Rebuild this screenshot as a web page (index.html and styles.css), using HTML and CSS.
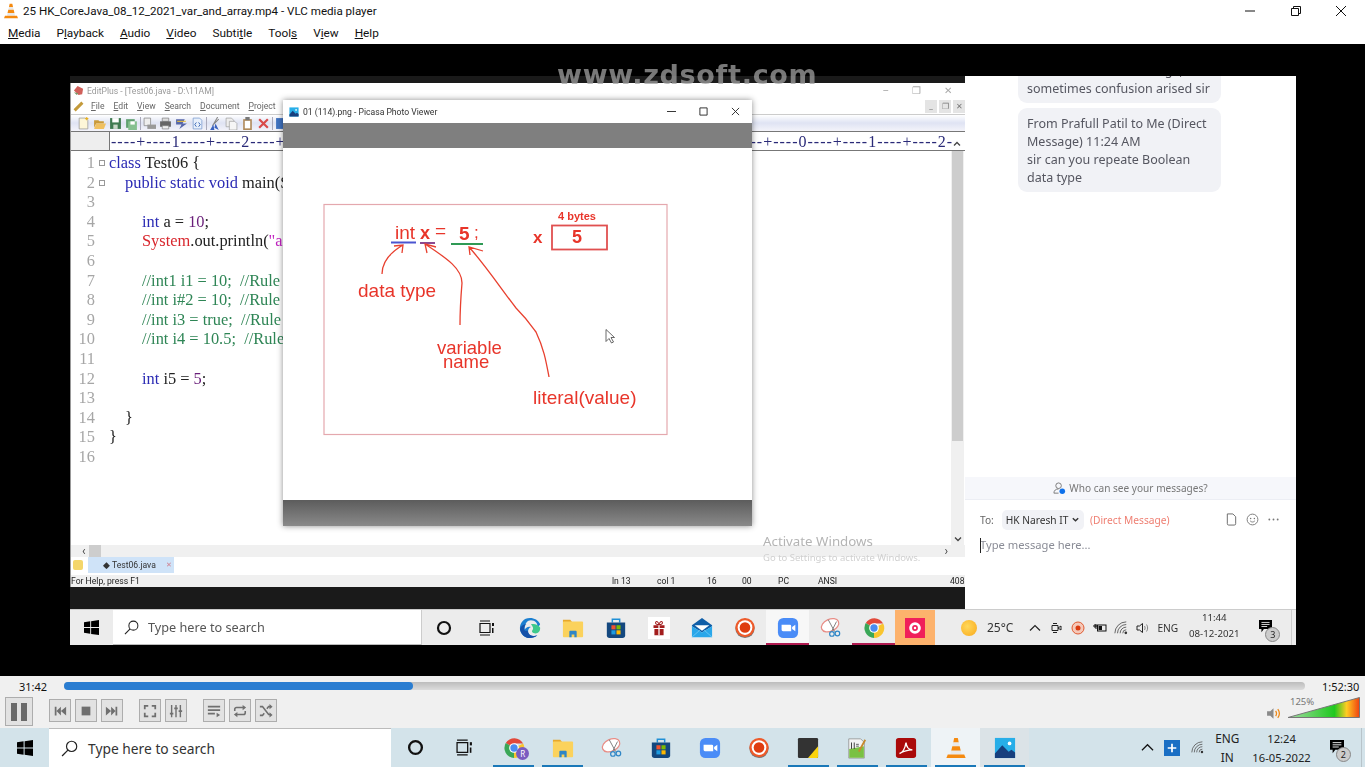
FILE: index.html
```html
<!DOCTYPE html>
<html lang="en">
<head>
    <meta charset="UTF-8">
    <title>25 HK_CoreJava_08_12_2021_var_and_array.mp4 - VLC media player</title>
    <link rel="stylesheet" href="styles.css">
</head>
<body>
    <!-- shared icons -->
    <svg class="sprite" xmlns="http://www.w3.org/2000/svg">
        <symbol id="i-win" viewBox="0 0 16 16"><path d="M0 2.300 6.600 1.300V7.500H0zM7.600 1.200 16 0V7.500H7.600zM0 8.500H6.600V14.700L0 13.700zM7.600 8.500H16V16L7.600 14.800z"/></symbol>
        <symbol id="i-search" viewBox="0 0 16 16"><circle cx="10" cy="6" r="4.800" fill="none" stroke="#222" stroke-width="1.100"/><path d="M6.500 9.500 1 15" stroke="#222" stroke-width="1.200"/></symbol>
        <symbol id="i-cortana" viewBox="0 0 16 16"><circle cx="8" cy="8" r="6" fill="none" stroke="#111" stroke-width="2.200"/></symbol>
        <symbol id="i-taskview" viewBox="0 0 16 16"><path d="M1 1h10M1 15h10M1 3.500h10v9H1z" fill="none" stroke="#111" stroke-width="1.200"/><rect x="13" y="3" width="2" height="3" fill="#111"/><rect x="13" y="8" width="1.500" height="5" fill="#111"/></symbol>
        <symbol id="i-edge" viewBox="0 0 24 24"><path d="M12 1C5 1 1 6.500 1 12c0 6.500 5 11 11 11 3.500 0 6-1 8-3-4 1.500-9 .5-10-3.500-.5-2.500 1-4.500 3-5.500-3-1-6 1-7 3C6.500 6.500 9 3.500 13 3.500c5 0 7.500 3.500 7 7 2-.5 3-2 3-3C21 3.500 17 1 12 1z" fill="#1b7fd0"/><path d="M13 8c4-1 8 .5 10 3.500 .5 4-2 6.500-5 6.500-3 0-5-2-3-4 1-1.500 0-4-2-6z" fill="#3ec98c"/><path d="M9.500 15c.5 5 6 7 10.500 5-2.500 2-5 3-8 3-6 0-10-4.500-11-10 1-3 4-5 7-5-2 1-3 4-1.500 7z" fill="#1450a8"/></symbol>
        <symbol id="i-folder" viewBox="0 0 24 24"><path d="M1 3h8l2 2.500H1z" fill="#e8a92c"/><rect x="1" y="5" width="22" height="17" rx="1" fill="#fbd25c"/><path d="M8 22v-6a1 1 0 0 1 1-1h6a1 1 0 0 1 1 1v6h-2.500v-3h-3v3z" fill="#2f86c6"/></symbol>
        <symbol id="i-store" viewBox="0 0 24 24"><path d="M8 6V2.500h8V6" fill="none" stroke="#1f8fd6" stroke-width="1.600"/><path d="M2 6h20v14a3 3 0 0 1-3 3H5a3 3 0 0 1-3-3z" fill="#14487f"/><rect x="7" y="9" width="4.500" height="4.500" fill="#f2522e"/><rect x="12.500" y="9" width="4.500" height="4.500" fill="#7fba00"/><rect x="7" y="14.500" width="4.500" height="4.500" fill="#1d9be0"/><rect x="12.500" y="14.500" width="4.500" height="4.500" fill="#ffb900"/></symbol>
        <symbol id="i-gift" viewBox="0 0 24 24"><rect width="24" height="24" fill="#fff"/><path d="M6 9h12v3H6zM7 13h10v7H7z" fill="#a31d1d"/><path d="M11.300 8h1.400v12h-1.400z" fill="#fff"/><path d="M12 8.500C9 8.500 7.500 7 8.500 5.500S12 6 12 8.500c0-2.500 2.500-4.500 3.500-3s-.5 3-3.500 3z" fill="none" stroke="#a31d1d" stroke-width="1.100"/></symbol>
        <symbol id="i-mail" viewBox="0 0 24 24"><path d="M1 9 12 1l11 8v1L12 17 1 10z" fill="#0f5ea8"/><path d="M1 10v12h22V10L12 17z" fill="#29a7ea"/><path d="M4 9h16l-8 6z" fill="#fff"/><path d="M1 22 10 14M23 22 14 14" stroke="#7ccdf5" stroke-width=".8"/></symbol>
        <symbol id="i-rec" viewBox="0 0 24 24"><circle cx="12" cy="12.500" r="10.500" fill="#777"/><circle cx="12" cy="11.500" r="10.500" fill="#ee5a2a"/><circle cx="12" cy="11.500" r="8" fill="#fff"/><circle cx="12" cy="11.500" r="5.800" fill="#df3d10"/></symbol>
        <symbol id="i-zoom" viewBox="0 0 24 24"><rect x="1" y="1" width="22" height="22" rx="6" fill="#4a8cf7"/><path d="M5 8.500h9a1.500 1.500 0 0 1 1.500 1.500v5.500h-9A1.500 1.500 0 0 1 5 14zM16.500 11 20 8.500v7L16.500 13z" fill="#fff"/></symbol>
        <symbol id="i-snip" viewBox="0 0 24 24"><ellipse cx="11" cy="9" rx="10" ry="6.500" transform="rotate(-25 11 9)" fill="#fff" stroke="#e88d86" stroke-width="1.300"/><path d="M9 3 16 16M18 5 13 15" stroke="#777" stroke-width="1"/><circle cx="13" cy="18.500" r="2.500" fill="none" stroke="#2f86c6" stroke-width="1.300"/><circle cx="19" cy="18" r="2.500" fill="none" stroke="#2f86c6" stroke-width="1.300"/></symbol>
        <symbol id="i-chrome" viewBox="0 0 24 24"><path d="M12 12 3 6.500A11 11 0 0 1 22 7H12z" fill="#e2493a"/><path d="M12 12 22 7a11 11 0 0 1-10 16z" fill="#f9c52f"/><path d="M12 12v11A11 11 0 0 1 3 6.500z" fill="#3aa757"/><circle cx="12" cy="12" r="5.300" fill="#fff"/><circle cx="12" cy="12" r="4" fill="#4a8cf0"/></symbol>
        <symbol id="i-pink" viewBox="0 0 24 24"><rect width="24" height="24" fill="#f01f5a"/><circle cx="12" cy="12" r="7" fill="#fff"/><circle cx="12" cy="12" r="3.500" fill="#f01f5a"/><circle cx="12" cy="12" r="1.500" fill="#fff"/><path d="M15 3.500h4v4z" fill="#f01f5a"/></symbol>
        <symbol id="i-sticky" viewBox="0 0 24 24"><rect x="1" y="1" width="22" height="22" rx="1.500" fill="#333"/><path d="M23 10v11.500a1.500 1.500 0 0 1-1.500 1.500H12z" fill="#fbd40f"/></symbol>
        <symbol id="i-notepad" viewBox="0 0 24 24"><path d="M3 2h13l4 4v17H3z" fill="#f3f3f3" stroke="#888" stroke-width=".8"/><path d="M3.500 13 19.500 10v12.500h-16z" fill="#7ac143"/><path d="M6 6v7M9 6v7" stroke="#333" stroke-width="1"/><path d="M11 8h3M11 10h3" stroke="#555"/><path d="M14 16 21 3" stroke="#c68a2d" stroke-width="2"/></symbol>
        <symbol id="i-pdf" viewBox="0 0 24 24"><rect x="1" y="1" width="22" height="22" rx="3" fill="#aa0a0a"/><path d="M5 18c3-1 6-6 7-12 .5 5 3 8 7 8-5 0-9 1-14 4z" fill="none" stroke="#fff" stroke-width="1.500"/></symbol>
        <symbol id="i-vlc" viewBox="0 0 24 24"><path d="M10 1h4l1 5H9z" fill="#f58a10"/><path d="M9 6h6l1 4H8z" fill="#e9e9e9"/><path d="M8 10h8l1.200 5H6.800z" fill="#f58a10"/><path d="M6.800 15h10.400l1 4H5.800z" fill="#e9e9e9"/><path d="M3 19h18l1.500 4h-21z" fill="#f58a10"/></symbol>
        <symbol id="i-photos" viewBox="0 0 24 24"><rect x="1" y="1" width="22" height="22" fill="#27aee8"/><circle cx="17" cy="7" r="2" fill="#fff"/><path d="M1 18 9 9l7 7 3-2 4 3v6H1z" fill="#173f7d"/></symbol>
        <symbol id="i-notif" viewBox="0 0 16 16"><path d="M0 0h16v11H6l-3 4v-4H0z"/><path d="M3 3h10M3 5.500h10M3 8h7" stroke="#fff" stroke-width="1"/></symbol>
        <symbol id="i-wifi" viewBox="0 0 16 16"><path d="M1 14a13 13 0 0 1 13-13M4 14A10 10 0 0 1 14 4M7 14a7 7 0 0 1 7-7M10 14a4 4 0 0 1 4-4" fill="none" stroke="#555" stroke-width="1"/><circle cx="13.500" cy="13.500" r="1.500" fill="#333"/></symbol>
    </svg>

    <div class="vlc">
        <header class="titlebar">
            <svg class="titlebar-logo"><use href="#i-vlc"/></svg>
            <span class="titlebar-text">25 HK_CoreJava_08_12_2021_var_and_array.mp4 - VLC media player</span>
            <div class="winbtns">
                <svg viewBox="0 0 10 10"><path d="M0 5h10" stroke="#111"/></svg>
                <svg viewBox="0 0 10 10"><path d="M.5 2.500h7v7h-7zM2.500 2.500v-2h7v7h-2" fill="none" stroke="#111"/></svg>
                <svg viewBox="0 0 10 10"><path d="M0 0l10 10M10 0 0 10" stroke="#111"/></svg>
            </div>
        </header>
        <nav class="menubar">
            <span><u>M</u>edia</span>
            <span>P<u>l</u>ayback</span>
            <span><u>A</u>udio</span>
            <span><u>V</u>ideo</span>
            <span>Subti<u>t</u>le</span>
            <span>Tool<u>s</u></span>
            <span>V<u>i</u>ew</span>
            <span><u>H</u>elp</span>
        </nav>

        <main class="video">
            <div class="watermark">www.zdsoft.com</div>
            <div class="rec">
                <section class="desk">
                    <div class="editplus">
                        <div class="ep-title">
                            <svg class="ep-logo" viewBox="0 0 12 12"><path d="M1 6 5 1l6 3-1 6-4 1z" fill="#d0605a"/><path d="M1 8l3 3 2-2z" fill="#7a9a6a"/></svg>
                            <span>EditPlus - [Test06.java - D:\11AM]</span>
                            <div class="ep-winbtns"><i>&#8211;</i><i>&#10064;</i><i>&#10005;</i></div>
                        </div>
                        <div class="ep-menu">
                            <span class="ep-pen"></span>
                            <span><u>F</u>ile</span><span><u>E</u>dit</span><span><u>V</u>iew</span><span><u>S</u>earch</span><span><u>D</u>ocument</span><span><u>P</u>roject</span>
                            <div class="ep-subbtns"><i>_</i><i>&#10064;</i><i>&#10005;</i></div>
                        </div>
                        <div class="ep-tools">
                            <svg viewBox="0 0 12 12"><path d="M2 1h6l2 2v8H2z" fill="#fdf6d8" stroke="#999" stroke-width=".7"/><path d="M9 0v3M7.500 1.500h3" stroke="#e8b020"/></svg>
                            <svg viewBox="0 0 12 12"><path d="M1 3h4l1 1h4v2H3L1 10z" fill="#c99a3a"/><path d="M3 6h9l-2 5H1z" fill="#f0c060"/></svg>
                            <svg viewBox="0 0 12 12"><path d="M1 1h10v10H1z" fill="#3f7a50"/><path d="M3 1h6v4H3z" fill="#fff"/><path d="M4 7h4v4H4z" fill="#c8d8c8"/></svg>
                            <svg viewBox="0 0 12 12"><path d="M1 2h8v8H1z" fill="#5fa070"/><path d="M3 4h8v8H3z" fill="#86c090"/><path d="M5 4h4v3H5z" fill="#fff"/></svg>
                            <b></b>
                            <svg viewBox="0 0 12 12"><path d="M1 1h6v7H1z" fill="#eee" stroke="#888" stroke-width=".7"/><path d="M4 7h8v4H4z" fill="#999"/></svg>
                            <svg viewBox="0 0 12 12"><path d="M3 1h6v3H3z" fill="#ddd" stroke="#777" stroke-width=".6"/><path d="M1 4h10v5H1z" fill="#666"/><path d="M3 8h6v3H3z" fill="#eee" stroke="#777" stroke-width=".6"/></svg>
                            <svg viewBox="0 0 12 12"><path d="M1 2h8l-2 4h4L4 11l2-4H1z" fill="#5566aa"/><path d="M2 4h8" stroke="#e8c040"/></svg>
                            <svg viewBox="0 0 12 12"><path d="M2 1h6l2 2v8H2z" fill="#e8f0fb" stroke="#7a9ad0" stroke-width=".7"/><path d="M5 5 3.500 7 5 9M7 5l1.500 2L7 9" fill="none" stroke="#2a5ab0" stroke-width=".8"/></svg>
                            <b></b>
                            <svg viewBox="0 0 12 12"><path d="M8 0 4 7M9 2 3 8" stroke="#888"/><path d="M4 7 1 12h4zM6 6l3 6-4-2z" fill="#3a62c0"/></svg>
                            <svg viewBox="0 0 12 12"><path d="M1 1h5l2 2v6H1z" fill="#eee" stroke="#999" stroke-width=".6"/><path d="M4 4h5l2 2v6H4z" fill="#f6f6f6" stroke="#999" stroke-width=".6"/></svg>
                            <svg viewBox="0 0 12 12"><path d="M2 2h8v10H2z" fill="#b08a5a"/><path d="M3.500 3.500h5v7h-5z" fill="#fff"/><path d="M4 0h4v3H4z" fill="#777"/></svg>
                            <svg viewBox="0 0 12 12"><path d="M2 2l8 8M10 2l-8 8" stroke="#d94a4a" stroke-width="2"/></svg>
                            <b></b>
                            <svg viewBox="0 0 12 12"><path d="M1 1h10v10H1z" fill="#3f72c0"/></svg>
                        </div>
                        <div class="ep-ruler">
                            <div class="ruler-text">----+----1----+----2----+----3----+----4----+----5----+----6----+----7----+----8----+----9----+----0----+----1----+----2-</div>
                        </div>
                        <div class="ep-body">
                            <div class="code">
                                <div class="ln"><em>1</em><s class="fold"></s><span><b>class</b> Test06 {</span></div>
                                <div class="ln"><em>2</em><s class="fold"></s><span class="in1"><b>public static void</b> main(String[] args) {</span></div>
                                <div class="ln"><em>3</em><s></s><span></span></div>
                                <div class="ln"><em>4</em><s></s><span class="in2"><b>int</b> a = <q>10</q>;</span></div>
                                <div class="ln"><em>5</em><s></s><span class="in2"><mark>System</mark>.out.println(<q class="str">"a = "</q> + a);</span></div>
                                <div class="ln"><em>6</em><s></s><span></span></div>
                                <div class="ln"><em>7</em><s></s><span class="in2 cm">//int1 i1 = 10;&nbsp; //Rule 1</span></div>
                                <div class="ln"><em>8</em><s></s><span class="in2 cm">//int i#2 = 10;&nbsp; //Rule 2</span></div>
                                <div class="ln"><em>9</em><s></s><span class="in2 cm">//int i3 = true;&nbsp; //Rule 3</span></div>
                                <div class="ln"><em>10</em><s></s><span class="in2 cm">//int i4 = 10.5;&nbsp; //Rule 4</span></div>
                                <div class="ln"><em>11</em><s></s><span></span></div>
                                <div class="ln"><em>12</em><s></s><span class="in2"><b>int</b> i5 = <q>5</q>;</span></div>
                                <div class="ln"><em>13</em><s></s><span></span></div>
                                <div class="ln"><em>14</em><s></s><span class="in1">}</span></div>
                                <div class="ln"><em>15</em><s></s><span>}</span></div>
                                <div class="ln"><em>16</em><s></s><span></span></div>
                            </div>
                            <div class="ep-vscroll">
                                <svg class="vs-up" viewBox="0 0 10 10"><path d="M2 6.500 5 3.500l3 3" fill="none" stroke="#444" stroke-width="1.300"/></svg>
                                <div class="thumb"></div>
                                <svg class="vs-down" viewBox="0 0 10 10"><path d="M2 3.500 5 6.500l3-3" fill="none" stroke="#444" stroke-width="1.300"/></svg>
                            </div>
                        </div>
                        <div class="ep-hscroll"><span class="hs-left">&lsaquo;</span><span class="hs-thumb"></span><span class="hs-right">&rsaquo;</span></div>
                        <div class="ep-tabs">
                            <span class="tab-folder"></span>
                            <span class="tab"><span class="tab-name">&#9670; Test06.java</span><span class="tab-x">&#10005;</span></span>
                        </div>
                        <div class="ep-status">
                            <span class="st-help">For Help, press F1</span>
                            <span class="st-ln">ln 13</span>
                            <span class="st-col">col 1</span>
                            <span class="st-a">16</span>
                            <span class="st-b">00</span>
                            <span class="st-pc">PC</span>
                            <span class="st-ansi">ANSI</span>
                            <span class="st-size">408</span>
                        </div>
                        <div class="activate">
                            <div class="activate-a">Activate Windows</div>
                            <div class="activate-b">Go to Settings to activate Windows.</div>
                        </div>
                    </div>

                    <div class="picasa">
                        <div class="pc-title">
                            <svg class="pc-logo"><use href="#i-photos"/></svg>
                            <span>01 (114).png - Picasa Photo Viewer</span>
                            <div class="pc-btns">
                                <svg viewBox="0 0 10 10"><path d="M0 5h10" stroke="#222"/></svg>
                                <svg viewBox="0 0 10 10"><path d="M1 1h8v8H1z" fill="none" stroke="#222"/></svg>
                                <svg viewBox="0 0 10 10"><path d="M1 1l8 8M9 1 1 9" stroke="#222"/></svg>
                            </div>
                        </div>
                        <div class="pc-bar-top"></div>
                        <svg class="sketch" viewBox="283 148 469 352" xmlns="http://www.w3.org/2000/svg">
                            <rect x="324" y="204.500" width="343" height="230" fill="none" stroke="#e4a8ae" stroke-width="1.200"/>
                            <text x="395" y="239" class="ink f19">int</text>
                            <text x="420" y="239" class="ink f18 bold">x</text>
                            <text x="435" y="237" class="ink f19">=</text>
                            <text x="459" y="240" class="ink f19 bold">5</text>
                            <text x="474" y="238" class="ink f17">;</text>
                            <path d="M391 242.500h25" stroke="#4a55d0" stroke-width="2"/>
                            <path d="M420 243h15" stroke="#8a4a90" stroke-width="2"/>
                            <path d="M451 244h32" stroke="#2f9a55" stroke-width="2"/>
                            <text x="558" y="220" class="ink f11 bold">4 bytes</text>
                            <text x="533" y="243" class="ink f17 bold">x</text>
                            <rect x="552" y="225.500" width="55" height="24" fill="none" stroke="#e05050" stroke-width="1.800"/>
                            <text x="572" y="243" class="ink f18 bold">5</text>
                            <g fill="none" stroke="#e8402f" stroke-width="1.300">
                                <path d="M382 274c0-12 9-22 21-29M394 246l9-1-1 8"/>
                                <path d="M460 325c0-18 1-30 2-42 0-14-14-24-37-39M436 247l-11-3 2 9"/>
                                <path d="M549 377c-3-16-5-28-13-45-8-11-10-14-20-24-14-18-30-42-47-61M483 251l-14-4 1 8"/>
                            </g>
                            <text x="358" y="297" class="ink f19">data type</text>
                            <text x="437" y="354" class="ink f185">variable</text>
                            <text x="443" y="368" class="ink f185">name</text>
                            <text x="533" y="404" class="ink f19">literal(value)</text>
                            <path d="M606 329.500v12l3-3 2.500 4.500 2-1-2.500-4.500h3.500z" fill="#fff" stroke="#444" stroke-width=".8"/>
                        </svg>
                        <div class="pc-bar-bottom"></div>
                    </div>
                    <div class="desk-gap"></div>
                </section>

                <aside class="chat">
                    <div class="chat-list">
                        <div class="bubble">Shall we use this message,<br>sometimes confusion arised sir</div>
                        <div class="bubble">From Prafull Patil to Me (Direct Message) 11:24 AM<br>sir can you repeate Boolean data type</div>
                    </div>
                    <div class="who">
                        <svg viewBox="0 0 14 14"><circle cx="6" cy="4" r="3" fill="none" stroke="#777"/><path d="M1 12c0-3 2-4.500 5-4.500" fill="none" stroke="#777"/><path d="M1 12h5" stroke="#777"/><circle cx="10" cy="10" r="3" fill="#0e71eb"/></svg>
                        <span>Who can see your messages?</span>
                    </div>
                    <div class="compose-head">
                        <span class="to">To:</span>
                        <span class="chip">HK Naresh IT <svg viewBox="0 0 10 10"><path d="M2 3.500 5 6.500 8 3.500" fill="none" stroke="#333" stroke-width="1.500"/></svg></span>
                        <span class="direct">(Direct Message)</span>
                        <div class="compose-icons">
                            <svg viewBox="0 0 12 14"><path d="M1.500 1h6l3 3v7.500a1.500 1.500 0 0 1-1.500 1.500H3a1.500 1.500 0 0 1-1.500-1.500z" fill="none" stroke="#666"/></svg>
                            <svg viewBox="0 0 14 14"><circle cx="7" cy="7" r="5.800" fill="none" stroke="#777"/><circle cx="5" cy="5.800" r=".8" fill="#777"/><circle cx="9" cy="5.800" r=".8" fill="#777"/><path d="M4.500 8.500c1.500 1.600 3.500 1.600 5 0" fill="none" stroke="#777"/></svg>
                            <svg viewBox="0 0 14 14"><circle cx="2.500" cy="7" r="1" fill="#777"/><circle cx="7" cy="7" r="1" fill="#777"/><circle cx="11.500" cy="7" r="1" fill="#777"/></svg>
                        </div>
                    </div>
                    <div class="compose-input"><span class="caret"></span>Type message here...</div>
                </aside>

                <footer class="inner-bar">
                    <span class="ib-start"><svg><use href="#i-win"/></svg></span>
                    <span class="ib-search"><svg><use href="#i-search"/></svg>Type here to search</span>
                    <span class="ib-cell"><svg class="small"><use href="#i-cortana"/></svg></span>
                    <span class="ib-cell"><svg class="small"><use href="#i-taskview"/></svg></span>
                    <span class="ib-cell"><svg><use href="#i-edge"/></svg></span>
                    <span class="ib-cell"><svg><use href="#i-folder"/></svg></span>
                    <span class="ib-cell"><svg><use href="#i-store"/></svg></span>
                    <span class="ib-cell"><svg><use href="#i-gift"/></svg></span>
                    <span class="ib-cell"><svg><use href="#i-mail"/></svg></span>
                    <span class="ib-cell"><svg><use href="#i-rec"/></svg></span>
                    <span class="ib-cell is-active"><svg><use href="#i-zoom"/></svg></span>
                    <span class="ib-cell"><svg><use href="#i-snip"/></svg></span>
                    <span class="ib-cell is-open"><svg><use href="#i-chrome"/></svg></span>
                    <span class="ib-cell is-flash"><svg><use href="#i-pink"/></svg></span>
                    <div class="ib-tray">
                        <span class="sun"></span>
                        <span class="temp">25°C</span>
                        <svg class="tray-i" viewBox="0 0 14 14"><path d="M2 9.500 7 4.500l5 5" fill="none" stroke="#222" stroke-width="1.200"/></svg>
                        <svg class="tray-i" viewBox="0 0 14 14"><path d="M2 4.500h6v5H2zM8 7l3-2v4zM3 2.500h4M3 11.500h4" fill="none" stroke="#222"/></svg>
                        <svg class="tray-i" viewBox="0 0 14 14"><circle cx="7" cy="7" r="6" fill="#f5c8b8" stroke="#e05a30"/><circle cx="7" cy="7" r="2.500" fill="#d93a10"/></svg>
                        <svg class="tray-i" viewBox="0 0 14 14"><path d="M1 4h2v2h-2zM3 3v5" stroke="#111" fill="none"/><rect x="4.500" y="4" width="8.500" height="6" fill="none" stroke="#111"/><rect x="5.500" y="5" width="3.500" height="4" fill="#111"/></svg>
                        <svg class="tray-i"><use href="#i-wifi"/></svg>
                        <svg class="tray-i" viewBox="0 0 14 14"><path d="M1 5h2.500L6.500 2.500v9L3.500 9H1z" fill="none" stroke="#222"/><path d="M8.500 5c.8 1.300.8 2.700 0 4M10.500 3.500c1.500 2 1.500 5 0 7" fill="none" stroke="#888"/></svg>
                        <span class="ib-eng">ENG</span>
                        <span class="ib-clock">11:44<br>08-12-2021</span>
                        <span class="notif"><svg><use href="#i-notif"/></svg><span class="notif-badge">3</span></span>
                    </div>
                </footer>
            </div>
        </main>

        <section class="controls">
            <div class="seek">
                <span class="seek-time">31:42</span>
                <div class="seek-track"><div class="seek-fill"></div></div>
                <span class="seek-time end">1:52:30</span>
            </div>
            <div class="btnrow">
                <button class="cbtn big"><svg viewBox="0 0 24 24"><path d="M4 3h6v18H4zM14 3h6v18h-6z" fill="#6a6a6a"/></svg></button>
                <div class="cgroup">
                    <button class="cbtn"><svg viewBox="0 0 16 16"><path d="M2 3h2v10H2zM9 3v10L4 8zM15 3v10L9 8z" fill="#6f6f6f"/></svg></button>
                    <button class="cbtn"><svg viewBox="0 0 16 16"><path d="M3 3h10v10H3z" fill="#6f6f6f"/></svg></button>
                    <button class="cbtn"><svg viewBox="0 0 16 16"><path d="M14 3h-2v10h2zM7 3v10l5-5zM1 3v10l6-5z" fill="#6f6f6f"/></svg></button>
                </div>
                <div class="cgroup">
                    <button class="cbtn"><svg viewBox="0 0 16 16"><path d="M2 6V2h4M10 2h4v4M14 10v4h-4M6 14H2v-4" fill="none" stroke="#6f6f6f" stroke-width="2"/></svg></button>
                    <button class="cbtn"><svg viewBox="0 0 16 16"><path d="M3 1v14M8 1v14M13 1v14" stroke="#6f6f6f" stroke-width="1.600"/><path d="M1 10h4v2H1zM6 4h4v2H6zM11 7h4v2h-4z" fill="#6f6f6f"/></svg></button>
                </div>
                <div class="cgroup">
                    <button class="cbtn"><svg viewBox="0 0 16 16"><path d="M1 3h14M1 7h14M1 11h8" stroke="#6f6f6f" stroke-width="1.800"/><path d="M11 10v5l4-2.500z" fill="#6f6f6f"/></svg></button>
                    <button class="cbtn"><svg viewBox="0 0 16 16"><path d="M2 8V6a2 2 0 0 1 2-2h9M14 8v2a2 2 0 0 1-2 2H3" fill="none" stroke="#6f6f6f" stroke-width="1.800"/><path d="M11 1l4 3-4 3zM5 9l-4 3 4 3z" fill="#6f6f6f"/></svg></button>
                    <button class="cbtn"><svg viewBox="0 0 16 16"><path d="M1 3h3l7 9h2M1 13h3l2-2.500M9 5.500 11 3h2" fill="none" stroke="#6f6f6f" stroke-width="1.800"/><path d="M12 0l3.500 3L12 6zM12 9.500l3.500 3L12 15.500z" fill="#6f6f6f"/></svg></button>
                </div>
                <div class="volume">
                    <svg class="vol-icon" viewBox="0 0 14 14"><path d="M1 5h3l3-3v10L4 9H1z" fill="#8a8a8a"/><path d="M9 4.500c1 1.500 1 3.500 0 5M11 3c1.800 2.400 1.800 5.600 0 8" fill="none" stroke="#ee8a1a" stroke-width="1.200"/></svg>
                    <div class="vol-wrap">
                        <svg class="vol-bar" viewBox="0 0 73 21" preserveAspectRatio="none">
                            <defs>
                                <linearGradient id="vol-grad">
                                    <stop offset="0" stop-color="#a4dca4"/>
                                    <stop offset=".65" stop-color="#1fc81f"/>
                                    <stop offset=".82" stop-color="#ffcc22"/>
                                    <stop offset="1" stop-color="#f04010"/>
                                </linearGradient>
                            </defs>
                            <path d="M1 20.500 72.500 .5v20z" fill="url(#vol-grad)" stroke="#777" stroke-width="1"/>
                        </svg>
                        <span class="vol-pct">125%</span>
                    </div>
                </div>
            </div>
        </section>

        <footer class="taskbar">
            <span class="tb-start"><svg><use href="#i-win"/></svg></span>
            <span class="tb-search"><svg><use href="#i-search"/></svg>Type here to search</span>
            <span class="tb-cell"><svg class="med"><use href="#i-cortana"/></svg></span>
            <span class="tb-cell"><svg class="med"><use href="#i-taskview"/></svg></span>
            <span class="tb-cell is-open"><svg><use href="#i-chrome"/></svg><span class="avatar">R</span></span>
            <span class="tb-cell is-open"><svg><use href="#i-folder"/></svg></span>
            <span class="tb-cell"><svg><use href="#i-snip"/></svg></span>
            <span class="tb-cell"><svg><use href="#i-store"/></svg></span>
            <span class="tb-cell"><svg><use href="#i-zoom"/></svg></span>
            <span class="tb-cell"><svg><use href="#i-rec"/></svg></span>
            <span class="tb-cell is-open"><svg><use href="#i-sticky"/></svg></span>
            <span class="tb-cell is-open"><svg><use href="#i-notepad"/></svg></span>
            <span class="tb-cell is-open"><svg><use href="#i-pdf"/></svg></span>
            <span class="tb-cell is-open is-active"><svg><use href="#i-vlc"/></svg></span>
            <span class="tb-cell is-open is-hover"><svg><use href="#i-photos"/></svg></span>
            <div class="tb-tray">
                <svg class="tb-caret" viewBox="0 0 14 14"><path d="M1 10 7 4l6 6" fill="none" stroke="#111" stroke-width="1.300"/></svg>
                <span class="tb-plus"><svg viewBox="0 0 14 14"><path d="M7 2v10M2 7h10" stroke="#fff" stroke-width="2"/></svg></span>
                <svg class="tb-wifi"><use href="#i-wifi"/></svg>
                <span class="tb-eng">ENG<br>IN</span>
                <span class="tb-clock">12:24<br>16-05-2022</span>
                <span class="notif big"><svg><use href="#i-notif"/></svg><span class="notif-badge">2</span></span>
            </div>
        </footer>
    </div>
</body>
</html>
```

FILE: styles.css
```css
html, body {
    margin: 0;
    padding: 0;
    width: 1365px;
    height: 767px;
    overflow: hidden;
    background: #000;
    font-family: "Noto Sans", "Open Sans", sans-serif;
}
.sprite {
    position: absolute;
    width: 0;
    height: 0;
}
.vlc {
    display: flex;
    flex-direction: column;
    height: 767px;
}

/* title + menu */
.titlebar {
    height: 22px;
    background: #fff;
    display: flex;
    align-items: center;
    padding-left: 3px;
    color: #111;
    font-family: Roboto, sans-serif;
    font-size: 11.600px;
}
.titlebar-logo {
    width: 16px;
    height: 16px;
    margin-right: 4px;
}
.winbtns {
    margin-left: auto;
    display: flex;
    gap: 35.500px;
    padding-right: 19px;
}
.winbtns svg {
    width: 10px;
    height: 10px;
}
.menubar {
    height: 22px;
    background: #fff;
    display: flex;
    align-items: center;
    gap: 16px;
    padding-left: 8px;
    font-family: Roboto, sans-serif;
    font-size: 11.800px;
    color: #111;
}

/* video area */
.video {
    flex: 1;
    position: relative;
    background: #000;
    padding: 32px 69px 31px 70px;
}
.watermark {
    position: absolute;
    left: 557px;
    top: 15px;
    z-index: 5;
    font-family: "DejaVu Sans", sans-serif;
    font-weight: bold;
    font-size: 27px;
    letter-spacing: .7px;
    color: rgba(160, 160, 160, 0.75);
    filter: blur(.5px);
}
.rec {
    position: relative;
    display: grid;
    grid-template-columns: 895px 331px;
    grid-template-rows: 533px 36px;
    height: 569px;
}
.desk {
    position: relative;
    background: #1a1a1a;
    padding-top: 7px;
    filter: blur(.35px);
}
.desk-gap {
    height: 22px;
}

/* EditPlus */
.editplus {
    position: relative;
    height: 504px;
    background: #fff;
    display: flex;
    flex-direction: column;
    color: #333;
    font-family: Roboto, sans-serif;
    font-size: 8.600px;
    box-sizing: border-box;
    border-left: 1px solid #999;
}
.ep-title {
    height: 15px;
    display: flex;
    align-items: center;
    color: #999;
    padding-left: 2px;
    gap: 3px;
}
.ep-logo {
    width: 11px;
    height: 11px;
}
.ep-winbtns {
    margin-left: auto;
    display: flex;
    gap: 23px;
    padding-right: 13px;
    font-size: 10px;
    color: #aaa;
}
.ep-winbtns i, .ep-subbtns i {
    font-style: normal;
}
.ep-menu {
    height: 16px;
    display: flex;
    align-items: center;
    gap: 9px;
    padding-left: 2px;
    color: #666;
}
.ep-pen {
    width: 11px;
    height: 3px;
    background: #c49a3a;
    transform: rotate(-45deg);
    margin-right: -2px;
}
.ep-subbtns {
    margin-left: auto;
    display: flex;
    gap: 2px;
    font-size: 8px;
}
.ep-subbtns i {
    width: 12px;
    height: 13px;
    line-height: 13px;
    text-align: center;
    background: #e4e4e4;
    color: #777;
}
.ep-tools {
    height: 17px;
    display: flex;
    align-items: center;
    gap: 3px;
    padding-left: 6px;
    background: linear-gradient(#fff, #dfe3f3 50%, #f4f4fa);
    border-top: 1px solid #ccc;
    box-sizing: border-box;
}
.ep-tools svg {
    width: 13px;
    height: 13px;
}
.ep-tools b {
    width: 1px;
    height: 13px;
    background: #aab;
    margin: 0 -1px;
}
.ep-ruler {
    height: 20px;
    padding-left: 40px;
    overflow: hidden;
    border-top: 1px solid #777;
    border-bottom: 1px solid #777;
    box-sizing: border-box;
    background-color: #fff;
    background-image: linear-gradient(#777, #777), linear-gradient(#eee, #eee);
    background-size: 1px 100%, 38px 100%;
    background-position: 38px 0, 0 0;
    background-repeat: no-repeat;
}
.ruler-text {
    font-family: "Liberation Serif", serif;
    font-size: 16px;
    line-height: 20px;
    letter-spacing: 1px;
    color: #2a2a78;
    white-space: nowrap;
}
.ep-body {
    flex: 1;
    display: flex;
    min-height: 0;
}
.code {
    flex: 1;
    padding-top: 2px;
    font-family: "Liberation Serif", serif;
    font-size: 16.400px;
    color: #222;
}
.ln {
    display: flex;
    height: 19.600px;
    line-height: 19.600px;
    white-space: nowrap;
}
.ln em {
    width: 24px;
    text-align: right;
    font-style: normal;
    color: #a6a6a6;
}
.ln s {
    width: 6px;
    height: 6px;
    margin: 7px 4px 0 4px;
}
.ln s.fold {
    box-sizing: border-box;
    border: 1px solid #999;
}
.ln b {
    font-weight: normal;
    color: #2a2ab4;
}
.ln q {
    quotes: none;
    color: #6a1f7a;
}
.ln q.str {
    color: #c020c0;
}
.ln mark {
    background: none;
    color: #d8262c;
}
.ln .in1 { padding-left: 16px; }
.ln .in2 { padding-left: 33px; }
.ln .cm { color: #2e8555; }
.ep-vscroll {
    position: relative;
    width: 13px;
    margin-right: 1px;
    background: #f0f0f0;
    display: flex;
    flex-direction: column;
    align-items: center;
}
.ep-vscroll .thumb {
    width: 11px;
    height: 290px;
    background: #cdcdcd;
}
.vs-up {
    position: absolute;
    top: -12px;
    left: 1px;
    width: 10px;
    height: 10px;
}
.vs-down {
    width: 10px;
    height: 10px;
    margin-top: auto;
    margin-bottom: 1px;
}
.ep-hscroll {
    height: 12px;
    background: #f0f0f0;
    display: flex;
    align-items: center;
    padding-left: 11px;
    font-size: 12px;
    color: #444;
}
.hs-thumb {
    width: 12px;
    height: 12px;
    background: #cdcdcd;
    margin-left: 3px;
}
.hs-right {
    margin-left: auto;
    padding-right: 17px;
}
.ep-tabs {
    height: 16px;
    display: flex;
    align-items: center;
    background: #fff;
    margin-bottom: 2px;
    gap: 5px;
}
.tab-folder {
    width: 10px;
    height: 10px;
    margin-left: 2px;
    background: #f4d66a;
    border-radius: 2px;
}
.tab {
    width: 86px;
    height: 16px;
    background: #cfe3f8;
    display: flex;
    align-items: center;
    justify-content: space-between;
    padding: 0 2px 0 15px;
    box-sizing: border-box;
}
.tab-x {
    color: #d08090;
    font-size: 7px;
}
.ep-status {
    height: 12px;
    background: #f0f0f0;
    display: grid;
    grid-template-columns: 541px 45px 50px 35px 36px 40px 1fr 15px;
    align-items: center;
    white-space: nowrap;
    color: #222;
}
.activate {
    position: absolute;
    left: 692px;
    top: 449px;
    color: #b4b4b4;
}
.activate-a {
    font-family: "Noto Sans", sans-serif;
    font-size: 13.300px;
}
.activate-b {
    font-family: "Noto Sans", sans-serif;
    font-size: 9.500px;
    color: #d0d0d0;
    margin-top: 1px;
}

/* Picasa window */
.picasa {
    position: absolute;
    left: 213px;
    top: 24px;
    width: 469px;
    height: 426px;
    background: #fff;
    box-shadow: 0 0 6px rgba(0, 0, 0, 0.45);
    display: flex;
    flex-direction: column;
}
.pc-title {
    height: 23px;
    display: flex;
    align-items: center;
    padding-left: 6px;
    gap: 4px;
    font-family: Roboto, sans-serif;
    font-size: 8.600px;
    color: #333;
}
.pc-logo {
    width: 10px;
    height: 10px;
}
.pc-btns {
    margin-left: auto;
    display: flex;
    gap: 23px;
    padding-right: 12px;
}
.pc-btns svg {
    width: 9px;
    height: 9px;
}
.pc-bar-top {
    height: 25px;
    background: #7f7f7f;
}
.sketch {
    width: 469px;
    height: 352px;
    display: block;
}
.pc-bar-bottom {
    height: 26px;
    background: linear-gradient(#5c5c5c, #8a8a8a);
}
.ink {
    font-family: "Liberation Sans", sans-serif;
    fill: #e8352a;
}
.f11 { font-size: 11px; }
.f17 { font-size: 17px; }
.f18 { font-size: 18px; }
.f185 { font-size: 18.500px; }
.f19 { font-size: 19px; }
.bold { font-weight: bold; }

/* Zoom chat */
.chat {
    background: #fff;
    display: flex;
    flex-direction: column;
    filter: blur(.2px);
    font-size: 12.500px;
    color: #555660;
}
.chat-list {
    height: 116px;
    overflow: hidden;
    display: flex;
    flex-direction: column;
    justify-content: flex-end;
    gap: 5px;
    padding-left: 53px;
}
.bubble {
    width: 203px;
    box-sizing: border-box;
    padding: 7px 9px 5px;
    line-height: 18px;
    background: #f1f2f6;
    border-radius: 9px;
}
.who {
    margin-top: auto;
    height: 22px;
    background: #f6f7fb;
    border-bottom: 1px solid #eceef4;
    display: flex;
    align-items: center;
    justify-content: center;
    gap: 3px;
    font-size: 10.100px;
    color: #777;
    margin-bottom: 9px;
}
.who svg {
    width: 13px;
    height: 13px;
}
.compose-head {
    display: flex;
    align-items: center;
    height: 21px;
    padding-left: 15px;
    font-size: 10.200px;
}
.to {
    width: 22px;
    color: #666;
}
.chip {
    width: 82px;
    height: 20px;
    box-sizing: border-box;
    background: #f1f2f6;
    border-radius: 5px;
    display: flex;
    align-items: center;
    justify-content: center;
    gap: 3px;
    color: #333;
}
.chip svg {
    width: 9px;
    height: 9px;
}
.direct {
    margin-left: 6px;
    color: #ef7f72;
}
.compose-icons {
    margin-left: auto;
    display: flex;
    gap: 8px;
    padding-right: 16px;
    align-items: center;
}
.compose-icons svg {
    width: 13px;
    height: 13px;
}
.compose-input {
    position: relative;
    padding: 7px 0 0 15px;
    margin-bottom: 57px;
    font-size: 11.200px;
    color: #8a8c96;
}
.caret {
    position: absolute;
    left: 15px;
    top: 8px;
    width: 1px;
    height: 15px;
    background: #222;
}

/* taskbar inside the recording */
.inner-bar {
    grid-column: 1 / 3;
    display: flex;
    align-items: stretch;
    background: #ececec;
    border-top: 1px solid #ccc;
    box-sizing: border-box;
    filter: blur(.25px);
}
.ib-start {
    width: 43px;
    display: flex;
    align-items: center;
    justify-content: center;
}
.ib-start svg {
    width: 15px;
    height: 15px;
}
.ib-search {
    width: 309px;
    background: #fff;
    display: flex;
    align-items: center;
    gap: 9px;
    padding-left: 11px;
    box-sizing: border-box;
    font-size: 12.700px;
    color: #555;
    border-bottom: 1px solid #bbb;
    border-right: 1px solid #ccc;
}
.ib-search svg {
    width: 15px;
    height: 15px;
}
.ib-cell {
    width: 43px;
    display: flex;
    align-items: center;
    justify-content: center;
    box-sizing: border-box;
}
.ib-cell svg {
    width: 22px;
    height: 22px;
}
.ib-cell svg.small {
    width: 16px;
    height: 16px;
}
.ib-cell.is-active {
    background: #f7f7f7;
    box-shadow: inset 0 -2px 0 #b01a50;
}
.ib-cell.is-open {
    box-shadow: inset 0 -2px 0 #b01a50;
}
.ib-cell.is-flash {
    width: 40px;
    background: #fdb26c;
}
.ib-cell.is-flash svg {
    width: 20px;
    height: 20px;
}
.ib-tray {
    flex: 1;
    display: flex;
    align-items: center;
    padding-left: 26px;
    margin-right: 4px;
    border-right: 1px solid #ccc;
    font-size: 11.500px;
    color: #333;
}
.sun {
    width: 16px;
    height: 16px;
    border-radius: 50%;
    background: radial-gradient(circle at 40% 40%, #ffd85a, #f9a81a);
}
.temp {
    margin: 0 15px 0 10px;
    font-size: 12px;
}
.tray-i {
    width: 14px;
    height: 14px;
    margin-right: 7.500px;
}
.ib-eng {
    font-size: 10.200px;
}
.ib-clock {
    width: 52px;
    margin-left: 10px;
    padding-bottom: 3px;
    text-align: center;
    font-size: 9.700px;
    line-height: 16px;
    white-space: nowrap;
}
.notif {
    position: relative;
    margin-left: 18px;
    width: 16px;
    height: 16px;
}
.notif svg {
    width: 15px;
    height: 13px;
    display: block;
}
.notif-badge {
    position: absolute;
    left: 7px;
    top: 7px;
    width: 13px;
    height: 13px;
    line-height: 13px;
    border-radius: 50%;
    text-align: center;
    font-size: 9px;
    color: #222;
    background: #ccc;
    border: 1px solid #888;
}

/* VLC controls */
.controls {
    height: 52px;
    background: #f0f0f0;
    box-sizing: border-box;
    padding-top: 5px;
}
.seek {
    display: flex;
    align-items: center;
    height: 10px;
    font-size: 11px;
    color: #111;
}
.seek-time {
    width: 64px;
    padding-left: 19px;
    box-sizing: border-box;
}
.seek-time.end {
    width: 60px;
    padding-left: 17px;
}
.seek-track {
    flex: 1;
    height: 8px;
    background: linear-gradient(#bcbcbc, #dcdcdc);
    border-radius: 4px;
}
.seek-fill {
    width: 349px;
    height: 8px;
    background: #2a7dd1;
    border-radius: 4px;
}
.btnrow {
    display: flex;
    align-items: flex-start;
    margin-top: 6px;
    padding-left: 5px;
}
.cbtn {
    width: 22px;
    height: 23px;
    padding: 0;
    margin: 2px 0 0 0;
    box-sizing: border-box;
    border: 1px solid #adadad;
    background: #e2e2e2;
    display: flex;
    align-items: center;
    justify-content: center;
}
.cbtn svg {
    width: 14px;
    height: 14px;
}
.cbtn.big {
    width: 28px;
    height: 29px;
    margin-top: 0;
}
.cbtn.big svg {
    width: 24px;
    height: 24px;
}
.cgroup {
    display: flex;
    gap: 4px;
    margin-left: 16px;
}
.volume {
    margin-left: auto;
    display: flex;
    align-items: flex-end;
    gap: 6px;
    padding-right: 5px;
}
.vol-icon {
    width: 15px;
    height: 15px;
}
.vol-wrap {
    position: relative;
    width: 73px;
    height: 21px;
    margin-bottom: 3px;
}
.vol-bar {
    display: block;
    width: 73px;
    height: 21px;
}
.vol-pct {
    position: absolute;
    left: 3px;
    top: -2px;
    font-size: 9.500px;
    color: #777;
}

/* real taskbar */
.taskbar {
    height: 39px;
    display: flex;
    align-items: stretch;
    background: #d3e3ea;
}
.tb-start {
    width: 49px;
    display: flex;
    align-items: center;
    justify-content: center;
}
.tb-start svg {
    width: 16px;
    height: 16px;
}
.tb-search {
    width: 342px;
    background: #fff;
    display: flex;
    align-items: center;
    gap: 10px;
    padding-left: 12px;
    box-sizing: border-box;
    font-size: 13.800px;
    color: #333;
    border-top: 1px solid #bbb;
}
.tb-search svg {
    width: 17px;
    height: 17px;
}
.tb-cell {
    position: relative;
    width: 49.100px;
    display: flex;
    align-items: center;
    justify-content: center;
}
.tb-cell svg {
    width: 22px;
    height: 22px;
}
.tb-cell svg.med {
    width: 17px;
    height: 17px;
}
.tb-cell.is-open::after {
    content: "";
    position: absolute;
    left: 4px;
    right: 4px;
    bottom: 0;
    height: 2px;
    background: #1a78b8;
}
.tb-cell.is-active {
    background: #eef3f6;
}
.tb-cell.is-hover {
    background: #dbe3e7;
}
.avatar {
    position: absolute;
    left: 27px;
    top: 19px;
    width: 13px;
    height: 13px;
    line-height: 13px;
    border-radius: 50%;
    text-align: center;
    background: #7a5cc0;
    color: #fff;
    font-size: 8px;
}
.tb-tray {
    flex: 1;
    display: flex;
    align-items: center;
    padding-left: 112px;
    margin-right: 3px;
    border-right: 1px solid #b8c4ca;
    color: #222;
    font-size: 12.500px;
    line-height: 19px;
}
.tb-caret {
    width: 13px;
    height: 13px;
}
.tb-plus {
    margin-left: 10px;
    width: 16px;
    height: 16px;
    background: #1a6fc4;
    display: flex;
    align-items: center;
    justify-content: center;
}
.tb-plus svg {
    width: 12px;
    height: 12px;
}
.tb-wifi {
    width: 13px;
    height: 13px;
    margin-left: 11px;
}
.tb-eng {
    margin-left: 11px;
    text-align: center;
    font-size: 11.800px;
}
.tb-clock {
    margin-left: 13px;
    text-align: center;
    font-size: 11.200px;
}
.notif.big {
    margin-left: 18px;
}
.notif.big svg {
    width: 16px;
    height: 14px;
}
```
